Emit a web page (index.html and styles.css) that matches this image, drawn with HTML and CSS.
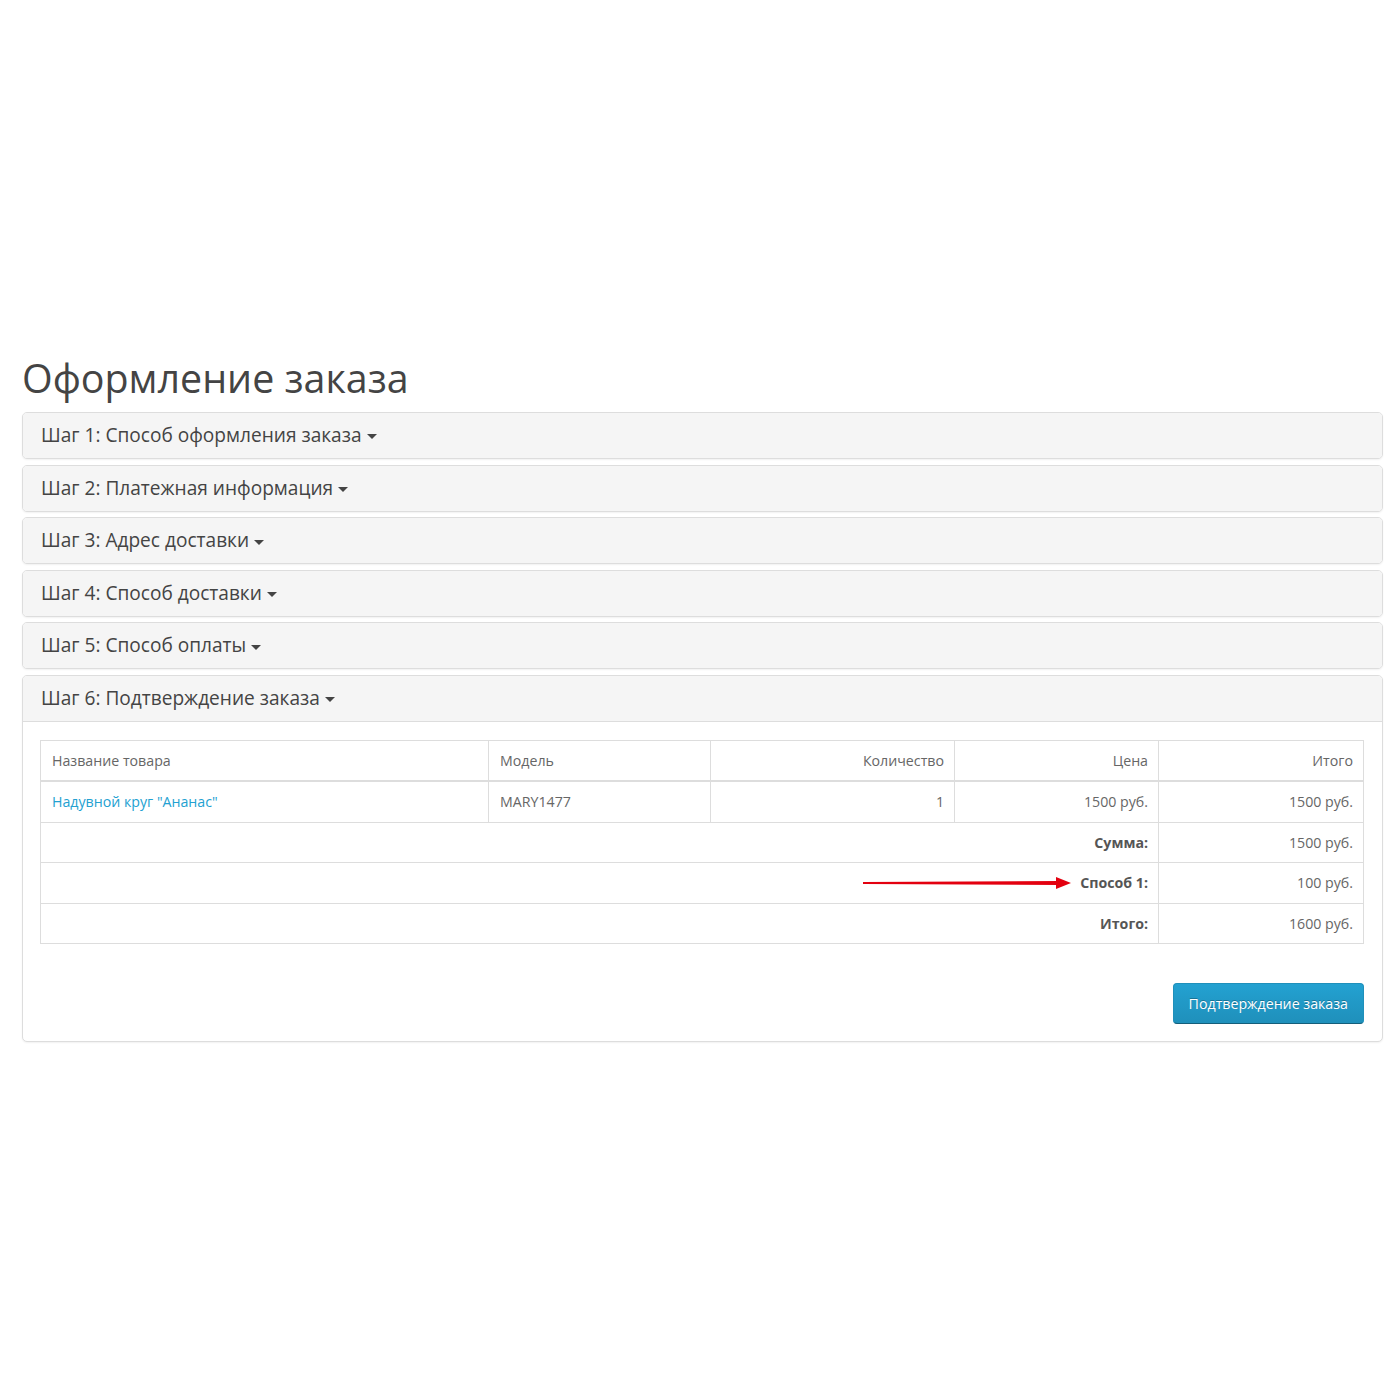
FILE: index.html
```html
<!DOCTYPE html>
<html lang="ru">
<head>
    <meta charset="UTF-8">
    <title>Оформление заказа</title>
    <link rel="stylesheet" href="styles.css">
</head>
<body>
    <div class="container">
        <h1>Оформление заказа</h1>

        <div class="panel-group">
            <div class="panel">
                <div class="panel-heading">Шаг 1: Способ оформления заказа <span class="caret"></span></div>
            </div>
            <div class="panel">
                <div class="panel-heading">Шаг 2: Платежная информация <span class="caret"></span></div>
            </div>
            <div class="panel">
                <div class="panel-heading">Шаг 3: Адрес доставки <span class="caret"></span></div>
            </div>
            <div class="panel">
                <div class="panel-heading">Шаг 4: Способ доставки <span class="caret"></span></div>
            </div>
            <div class="panel">
                <div class="panel-heading">Шаг 5: Способ оплаты <span class="caret"></span></div>
            </div>
            <div class="panel">
                <div class="panel-heading">Шаг 6: Подтверждение заказа <span class="caret"></span></div>
                <div class="panel-body">
                    <table class="order-table">
                        <thead>
                            <tr>
                                <td class="col-name">Название товара</td>
                                <td class="col-model">Модель</td>
                                <td class="col-qty text-right">Количество</td>
                                <td class="col-price text-right">Цена</td>
                                <td class="col-total text-right">Итого</td>
                            </tr>
                        </thead>
                        <tbody>
                            <tr>
                                <td><a href="#">Надувной круг "Ананас"</a></td>
                                <td>MARY1477</td>
                                <td class="text-right">1</td>
                                <td class="text-right">1500 руб.</td>
                                <td class="text-right">1500 руб.</td>
                            </tr>
                        </tbody>
                        <tfoot>
                            <tr>
                                <td colspan="4" class="text-right"><strong>Сумма:</strong></td>
                                <td class="text-right">1500 руб.</td>
                            </tr>
                            <tr>
                                <td colspan="4" class="text-right">
                                    <svg class="arrow" width="208" height="14" viewBox="0 0 208 14">
                                        <path d="M0 6 L196 5 L196 9 L0 8 Z" fill="#e3000f"/>
                                        <path d="M193 1 L208 7 L193 13 Z" fill="#e3000f"/>
                                    </svg><strong>Способ 1:</strong>
                                </td>
                                <td class="text-right">100 руб.</td>
                            </tr>
                            <tr>
                                <td colspan="4" class="text-right"><strong>Итого:</strong></td>
                                <td class="text-right">1600 руб.</td>
                            </tr>
                        </tfoot>
                    </table>
                    <div class="buttons">
                        <button class="btn-primary">Подтверждение заказа</button>
                    </div>
                </div>
            </div>
        </div>
    </div>
</body>
</html>
```

FILE: styles.css
```css
body {
    margin: 0;
    font-family: "Open Sans", "Noto Sans", sans-serif;
    color: #666;
    background-color: #fff;
}
.container {
    padding: 356px 17px 0 22px;
}
h1 {
    margin: 0 0 11px;
    font-size: 39.4px;
    font-weight: 400;
    line-height: 45px;
    color: #444;
}
.panel {
    margin-bottom: 5.6px;
    background-color: #fff;
    border: 1px solid #ddd;
    border-radius: 5px;
    box-shadow: 0 1px 2px rgba(0, 0, 0, 0.06);
}
.panel-heading {
    padding: 11px 18px;
    font-size: 19.1px;
    line-height: 23px;
    color: #444;
    background-color: #f5f5f5;
    border-radius: 4px;
}
.panel-body {
    padding: 18px 18px 17px 17px;
    border-top: 1px solid #ddd;
}
.panel:last-child .panel-heading {
    border-radius: 4px 4px 0 0;
}
.caret {
    display: inline-block;
    width: 0;
    height: 0;
    vertical-align: middle;
    border-top: 5px solid #444;
    border-left: 5px solid transparent;
    border-right: 5px solid transparent;
}
.order-table {
    width: 100%;
    border-collapse: collapse;
    font-size: 14.2px;
    line-height: 19.5px;
}
.order-table td {
    padding: 10px 10px 10px 11px;
    border: 1px solid #ddd;
}
.order-table thead td {
    border-bottom-width: 2px;
}
.col-name {
    width: 426px;
}
.col-model {
    width: 200px;
}
.col-qty {
    width: 222px;
}
.col-price {
    width: 182px;
}
.text-right {
    text-align: right;
}
.order-table a {
    color: #23a1d1;
    text-decoration: none;
}
.order-table strong {
    color: #555;
}
.arrow {
    display: inline-block;
    vertical-align: middle;
    margin: -3px 9px 0 0;
}
.buttons {
    display: flex;
    justify-content: flex-end;
    margin-top: 39px;
}
.btn-primary {
    padding: 10px 15px;
    font-family: inherit;
    font-size: 14.2px;
    line-height: 19px;
    color: #fff;
    text-shadow: 0 -1px 0 rgba(0, 0, 0, 0.25);
    background-color: #229ac8;
    background-image: linear-gradient(to bottom, #23a1d1, #1f90bb);
    border: 1px solid #1f90bb;
    border-bottom-color: #145e7a;
    border-radius: 4px;
    cursor: pointer;
}
```
